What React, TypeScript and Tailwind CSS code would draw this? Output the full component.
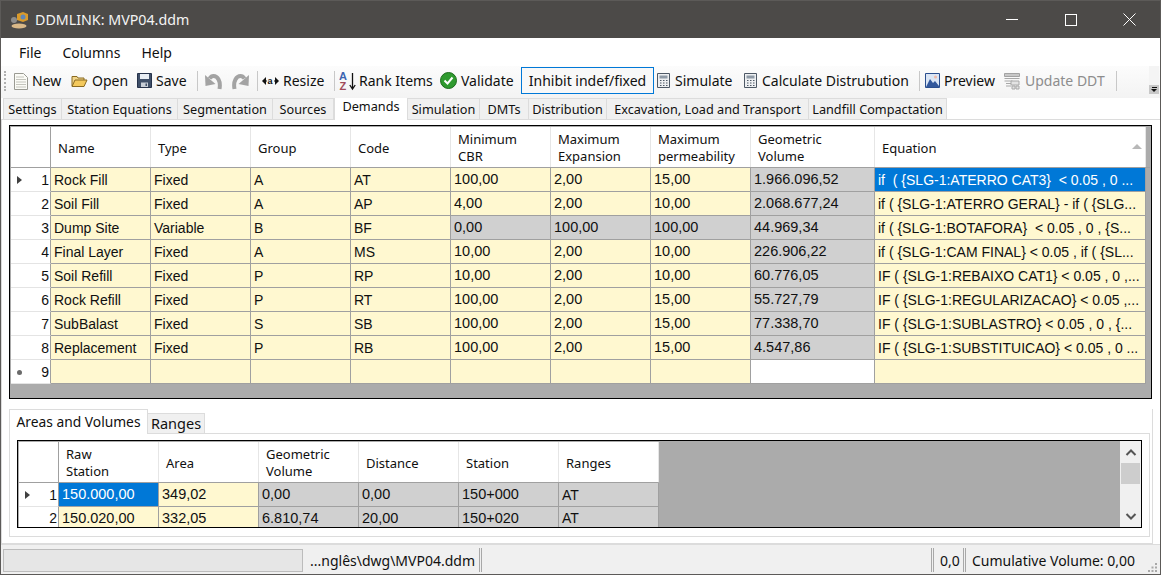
import type { ReactNode } from "react"

const ui = "font-['Noto_Sans',sans-serif]"
const cellFont = "font-['Liberation_Sans',sans-serif]"

const mainCols = "grid-cols-[40px_100px_100px_100px_100px_100px_100px_100px_124px_271px]"
const subCols = "grid-cols-[40px_100px_100px_100px_100px_100px_100px]"

const mainHeaders = ["Name", "Type", "Group", "Code", "Minimum\nCBR", "Maximum\nExpansion", "Maximum\npermeability", "Geometric\nVolume", "Equation"]

const rows = [
  ["Rock Fill", "Fixed", "A", "AT", "100,00", "2,00", "15,00", "1.966.096,52", "if  ( {SLG-1:ATERRO CAT3}  < 0.05 , 0 ..."],
  ["Soil Fill", "Fixed", "A", "AP", "4,00", "2,00", "10,00", "2.068.677,24", "if ( {SLG-1:ATERRO GERAL} - if ( {SLG..."],
  ["Dump Site", "Variable", "B", "BF", "0,00", "100,00", "100,00", "44.969,34", "if ( {SLG-1:BOTAFORA}  < 0.05 , 0 , {S..."],
  ["Final Layer", "Fixed", "A", "MS", "10,00", "2,00", "10,00", "226.906,22", "if ( {SLG-1:CAM FINAL} < 0.05 , if ( {SL..."],
  ["Soil Refill", "Fixed", "P", "RP", "10,00", "2,00", "10,00", "60.776,05", "IF ( {SLG-1:REBAIXO CAT1} < 0.05 , 0 ,..."],
  ["Rock Refill", "Fixed", "P", "RT", "100,00", "2,00", "15,00", "55.727,79", "IF ( {SLG-1:REGULARIZACAO} < 0.05 ,..."],
  ["SubBalast", "Fixed", "S", "SB", "100,00", "2,00", "15,00", "77.338,70", "IF ( {SLG-1:SUBLASTRO} < 0.05 , 0 , {..."],
  ["Replacement", "Fixed", "P", "RB", "100,00", "2,00", "15,00", "4.547,86", "IF ( {SLG-1:SUBSTITUICAO} < 0.05 , 0 ..."],
  ["", "", "", "", "", "", "", "", ""],
]

const subHeaders = ["Raw\nStation", "Area", "Geometric\nVolume", "Distance", "Station", "Ranges"]
const subRows = [
  ["150.000,00", "349,02", "0,00", "0,00", "150+000", "AT"],
  ["150.020,00", "332,05", "6.810,74", "20,00", "150+020", "AT"],
]

const tabs = [
  ["Settings", "w-[59px]"],
  ["Station Equations", "w-[116px]"],
  ["Segmentation", "w-[95px]"],
  ["Sources", "w-[61px]"],
  ["Demands", "w-[74px]"],
  ["Simulation", "w-[72px]"],
  ["DMTs", "w-[49px]"],
  ["Distribution", "w-[78px]"],
  ["Excavation, Load and Transport", "w-[202px]"],
  ["Landfill Compactation", "w-[138px]"],
]

function NewIcon() {
  return (
    <svg width="14" height="18" viewBox="0 0 14 18">
      <path d="M.5 1.500h9l4 4v12H.5z" fill="#fbfbf6" stroke="#9a9a92" />
      <path d="M2 5h8M2 7.500h10M2 10h10M2 12.500h10M2 15h10" stroke="#c4c4bc" />
    </svg>
  )
}

function OpenIcon() {
  return (
    <svg width="17" height="14" viewBox="0 0 17 14">
      <path d="M1 12V2.500h5l1 1.500h6v2" fill="#f1d58a" stroke="#8a6a20" />
      <path d="M1 12.500 4 6h12l-3 6.500z" fill="#f4c95c" stroke="#8a6a20" />
    </svg>
  )
}

function SaveIcon() {
  return (
    <svg width="15" height="15" viewBox="0 0 15 15">
      <path d="M.5.5h14v14H.5z" fill="#3f4f68" stroke="#26324a" />
      <path d="M3 1h9v5H3z" fill="#e8edf3" />
      <path d="M4 9.500h7V14H4z" fill="#c8ced6" />
      <path d="M8.500 10.500h1.500V13H8.500z" fill="#3f4f68" />
    </svg>
  )
}

function UndoIcon({ flip }: { flip?: boolean }) {
  return (
    <svg width="17" height="18" viewBox="0 0 17 18" className={flip ? "-scale-x-100" : ""}>
      <path d="M14.500 17C16 9 12.500 4 8.500 4 6.500 4 5.500 5 4.500 6.500" fill="none" stroke="#a3a3a3" strokeWidth="4" />
      <path d="M0 3 .5 14l10-2z" fill="#a3a3a3" />
    </svg>
  )
}

function ResizeIcon() {
  return (
    <svg width="17" height="10" viewBox="0 0 17 10">
      <path d="M0 5l4-4v8zM17 5l-4-4v8z" fill="#111" />
      <path d="M4 5h1M12 5h1" stroke="#111" />
      <text x="5.500" y="8" fontSize="9" fontWeight="700" fontFamily="Liberation Sans" fill="#111">a</text>
    </svg>
  )
}

function RankIcon() {
  return (
    <svg width="18" height="20" viewBox="0 0 18 20">
      <text x="0" y="9" fontSize="11" fontWeight="700" fontFamily="Liberation Sans" fill="#3b64b0">A</text>
      <text x="0.500" y="19" fontSize="11" fontWeight="700" fontFamily="Liberation Sans" fill="#a04a5a">Z</text>
      <path d="M13.500 2v16M10.800 14l2.700 4 2.700-4" fill="none" stroke="#111" strokeWidth="1.300" />
    </svg>
  )
}

function ValidateIcon() {
  return (
    <svg width="17" height="17" viewBox="0 0 17 17">
      <circle cx="8.500" cy="8.500" r="8" fill="#2f9a2f" stroke="#1d6b1d" />
      <path d="M4.500 8.500l3 3 5-6" fill="none" stroke="#fff" strokeWidth="2" />
    </svg>
  )
}

function CalcIcon() {
  return (
    <svg width="13" height="15" viewBox="0 0 13 15">
      <path d="M.5.5h12v14H.5z" fill="#eef0f2" stroke="#4e5966" />
      <path d="M2.500 2.500h8v3h-8z" fill="#8f9aa6" />
      <path d="M3 7.500h1.500M6 7.500h1.500M9 7.500h1.500M3 10h1.500M6 10h1.500M9 10h1.500M3 12.500h1.500M6 12.500h1.500M9 12.500h1.500" stroke="#4e5966" />
    </svg>
  )
}

function PreviewIcon() {
  return (
    <svg width="15" height="15" viewBox="0 0 15 15">
      <path d="M.5.5h14v14H.5z" fill="#dbe6f5" stroke="#2b4f8f" />
      <path d="M1 14 5 6l3 4 2-2 4 5v1z" fill="#33589c" />
      <circle cx="10.500" cy="4" r="1.500" fill="#f0b9a8" />
    </svg>
  )
}

function UpdateIcon() {
  return (
    <svg width="17" height="18" viewBox="0 0 17 18">
      <path d="M.5 1.500h15v3H.5z" fill="#c8c8c8" stroke="#a3a3a3" />
      <path d="M.5 6.500h15M.5 9h8M2 11.500h6M2 14h5" stroke="#a8a8a8" />
      <path d="M7 9h8v4H7zM8 14h3v3H8zM12 14h3v3h-3z" fill="#e3e3e3" stroke="#a8a8a8" />
    </svg>
  )
}

function ToolItem({ icon, label, width, gap = "gap-[4px]", disabled }: { icon: ReactNode; label: string; width: string; gap?: string; disabled?: boolean }) {
  return (
    <div className={`flex items-center shrink-0 ${width} ${gap} ${disabled ? "text-[#8d8d8d]" : "text-[#101010]"}`}>
      {icon}
      <span className="whitespace-nowrap">{label}</span>
    </div>
  )
}

function Sep({ margin }: { margin: string }) {
  return <div className={`w-px h-[20px] bg-[#c8c8c8] shrink-0 ${margin}`} />
}

function HeaderCell({ text, sort }: { text: string; sort?: boolean }) {
  return (
    <div className="relative flex items-center pl-[7px] pt-[2px] bg-white border-r border-[#e6e6e6] whitespace-pre-line leading-[17px] text-[13px] text-[#101010]">
      {text}
      {sort && <div className="absolute right-[3px] top-[17px] w-0 h-0 border-x-[5px] border-b-[5px] border-x-transparent border-b-[#b8b8b8]" />}
    </div>
  )
}

function RowHead({ n, mark }: { n: number; mark?: "arrow" | "star" }) {
  return (
    <div className="relative flex items-center justify-end pr-[1px] pt-[1px] bg-white border-r border-b border-[#a0a0a0] border-b-[#e4e4e4] text-[14px] text-[#101010]">
      {mark === "arrow" && <div className="absolute left-[6px] top-[8px] w-0 h-0 border-y-[4.500px] border-l-[5px] border-y-transparent border-l-[#404040]" />}
      {mark === "star" && <div className="absolute left-[6px] top-[10px] w-[5px] h-[5px] rounded-full bg-[#6a6a6a]" />}
      {n}
    </div>
  )
}

function Cell({ text, kind }: { text: string; kind: "edit" | "calc" | "blank" | "selected" }) {
  const tone = {
    edit: "bg-[#fff8d0] text-[#101010]",
    calc: "bg-[#d0d0d0] text-[#101010]",
    blank: "bg-white text-[#101010]",
    selected: "bg-[#0078d7] text-white",
  }[kind]
  const size = /^\d/.test(text) ? "text-[14.500px]" : "text-[14px]"
  return <div className={`flex items-center pl-[3px] pt-[1px] overflow-hidden whitespace-pre border-r border-b border-[#a0a0a0] ${size} ${tone}`}>{text}</div>
}

function mainKind(r: number, c: number) {
  if (r === 0 && c === 8) return "selected" as const
  if (c === 7) return r === 8 ? ("blank" as const) : ("calc" as const)
  if (r === 2 && c >= 4 && c <= 6) return "calc" as const
  return "edit" as const
}

function subKind(r: number, c: number) {
  if (r === 0 && c === 0) return "selected" as const
  return c < 2 ? ("edit" as const) : ("calc" as const)
}

export default function App() {
  return (
    <div className={`w-[1161px] h-[575px] flex flex-col overflow-hidden bg-white border border-[#5c5a58] border-t-0 ${ui}`}>
      {/* title bar */}
      <div className="h-[38px] shrink-0 flex items-center bg-[#4c4a48] text-white border-t border-[#5c5a58]">
        <svg width="22" height="20" viewBox="0 0 22 20" className="ml-[8px]">
          <ellipse cx="10" cy="16" rx="7.500" ry="2.500" fill="#d9b888" />
          <path d="M8 4l6-2 5 2v6l-5 2-6-2z" fill="#d99a2b" />
          <circle cx="14" cy="7" r="2.500" fill="#5f87b8" />
          <circle cx="5" cy="10" r="3" fill="#8d8d8d" />
        </svg>
        <span className="ml-[4px] text-[14.250px] text-[#f4f4f4]">DDMLINK: MVP04.ddm</span>
        <div className="ml-auto flex items-center mr-[1px]">
          <div className="w-[59px] h-[38px] flex items-center justify-center"><div className="w-[12px] h-px bg-white" /></div>
          <div className="w-[59px] h-[38px] flex items-center justify-center"><div className="w-[12px] h-[12px] border border-white" /></div>
          <div className="w-[59px] h-[38px] flex items-center justify-center">
            <svg width="13" height="13" viewBox="0 0 13 13"><path d="M.5.5l12 12M12.500.5l-12 12" stroke="#fff" /></svg>
          </div>
        </div>
      </div>

      {/* menu */}
      <div className="h-[28px] shrink-0 flex items-center pl-[18px] gap-[21px] bg-white text-[14px] text-[#101010]">
        <span>File</span>
        <span>Columns</span>
        <span>Help</span>
      </div>

      {/* toolbar */}
      <div className="h-[32px] shrink-0 flex items-center pb-[3px] bg-gradient-to-b from-[#fcfcfc] to-[#f3f3f3] text-[14px] relative">
        <div className="w-[2px] h-[20px] ml-[3px] mr-[8px] border-l-2 border-dotted border-[#b0b0b0] shrink-0" />
        <ToolItem icon={<NewIcon />} label="New" width="w-[57px]" />
        <ToolItem icon={<OpenIcon />} label="Open" width="w-[66px]" />
        <ToolItem icon={<SaveIcon />} label="Save" width="w-[60px]" />
        <Sep margin="mr-[7px]" />
        <div className="flex gap-[10px] w-[52px] shrink-0"><UndoIcon /><UndoIcon flip /></div>
        <Sep margin="mr-[4px]" />
        <ToolItem icon={<ResizeIcon />} label="Resize" width="w-[72px]" />
        <Sep margin="mr-[4px]" />
        <ToolItem icon={<RankIcon />} label="Rank Items" width="w-[101px]" gap="gap-[2px]" />
        <ToolItem icon={<ValidateIcon />} label="Validate" width="w-[81px]" />
        <div className="h-[27px] w-[133px] shrink-0 p-px bg-[#0078d7] mr-[3px]">
          <div className="h-full flex items-center justify-center bg-[#f8f8f8] text-[#101010] whitespace-nowrap">Inhibit indef/fixed</div>
        </div>
        <ToolItem icon={<CalcIcon />} label="Simulate" width="w-[87px]" gap="gap-[5px]" />
        <ToolItem icon={<CalcIcon />} label="Calculate Distrubution" width="w-[175px]" gap="gap-[5px]" />
        <Sep margin="mr-[5px]" />
        <ToolItem icon={<PreviewIcon />} label="Preview" width="w-[79px]" />
        <ToolItem icon={<UpdateIcon />} label="Update DDT" width="w-[112px]" disabled />
        <Sep margin="" />
        <div className="absolute right-[1px] top-0 w-[10px] h-[28px] bg-[#f4f4f4] flex flex-col justify-end">
          <div className="h-[9px] bg-[#c8c8c8] flex flex-col items-center justify-center gap-[1px]">
            <div className="w-[5px] h-px bg-[#111]" />
            <div className="w-0 h-0 border-x-[3px] border-t-[3px] border-x-transparent border-t-[#111]" />
          </div>
        </div>
      </div>

      {/* main tabs */}
      <div className="h-[22px] shrink-0 flex items-end pl-[2px] bg-white border-b border-[#dcdcdc] text-[12.700px] text-[#101010]">
        {tabs.map(([name, w]) =>
          name === "Demands" ? (
            <div key={name} className={`${w} h-[25px] -mb-px pb-[2px] flex items-center justify-center bg-white border border-b-0 border-[#dcdcdc]`}>{name}</div>
          ) : (
            <div key={name} className={`${w} h-[21px] pt-[1px] flex items-center justify-center bg-[#f0f0f0] border border-l-0 border-b-0 first:border-l border-[#dcdcdc] whitespace-nowrap`}>{name}</div>
          ),
        )}
      </div>

      {/* demands page */}
      <div className="flex-1 min-h-0 flex flex-col bg-white border-l border-[#dcdcdc]">
        <div className="ml-[7px] w-[1143px] mt-[5px] h-[274px] shrink-0 flex flex-col border border-black bg-[#ababab] p-px">
          <div className={`grid ${mainCols} h-[41px] shrink-0 border-b border-[#a0a0a0]`}>
            <div className="bg-white border-r border-[#a0a0a0]" />
            {mainHeaders.map((h) => (
              <HeaderCell key={h} text={h} sort={h === "Equation"} />
            ))}
          </div>
          {rows.map((row, r) => (
            <div key={r} className={`grid ${mainCols} h-[24px] shrink-0 ${cellFont}`}>
              <RowHead n={r + 1} mark={r === 0 ? "arrow" : r === 8 ? "star" : undefined} />
              {row.map((v, c) => (
                <Cell key={c} text={v} kind={mainKind(r, c)} />
              ))}
            </div>
          ))}
        </div>

        {/* lower panel */}
        <div className="w-[1151px] flex-1 min-h-0 mt-[10px] pl-[7px] pr-[2px] border-r border-b border-[#dcdcdc]">
          <div className="h-[25px] flex items-end text-[#101010]">
            <div className="w-[139px] h-[25px] flex items-center justify-center bg-white border border-b-0 border-[#dcdcdc] text-[13.800px]">Areas and Volumes</div>
            <div className="w-[57px] h-[21px] pt-[1px] flex items-center justify-center bg-[#f0f0f0] border border-l-0 border-[#dcdcdc] text-[14.500px]">Ranges</div>
            <div className="flex-1 h-px bg-[#dcdcdc]" />
          </div>
          <div className="h-[103px] border border-t-0 border-[#dcdcdc] px-[7px] pt-[6px]">
            <div className="h-[88px] flex border border-black bg-[#ababab] overflow-hidden">
              <div className="w-[640px] shrink-0 pl-[1px] pt-[1px]">
                <div className={`grid ${subCols} h-[41px] border-b border-[#a0a0a0]`}>
                  <div className="bg-white border-r border-[#a0a0a0]" />
                  {subHeaders.map((h) => (
                    <HeaderCell key={h} text={h} />
                  ))}
                </div>
                {subRows.map((row, r) => (
                  <div key={r} className={`grid ${subCols} ${r === 0 ? "h-[24px]" : "h-[22px]"} ${cellFont}`}>
                    <RowHead n={r + 1} mark={r === 0 ? "arrow" : undefined} />
                    {row.map((v, c) => (
                      <Cell key={c} text={v} kind={subKind(r, c)} />
                    ))}
                  </div>
                ))}
              </div>
              <div className="flex-1" />
              <div className="w-[21px] shrink-0 bg-[#f0f0f0] flex flex-col items-center">
                <svg width="12" height="20" viewBox="0 0 12 20" className="mt-[1px]"><path d="M1.500 13 6 8.500l4.500 4.500" fill="none" stroke="#555" strokeWidth="2" /></svg>
                <div className="w-[19px] h-[21px] bg-[#cdcdcd] mt-[1px]" />
                <svg width="12" height="20" viewBox="0 0 12 20" className="mt-auto mb-[1px]"><path d="M1.500 8 6 12.500l4.500-4.500" fill="none" stroke="#555" strokeWidth="2" /></svg>
              </div>
            </div>
          </div>
        </div>
      </div>

      {/* status bar */}
      <div className="h-[30px] shrink-0 relative flex items-center pt-[1px] bg-[#f0f0f0] border-t border-[#dcdcdc] text-[14px] text-[#101010]">
        <div className="w-[300px] h-[23px] ml-[2px] bg-[#e6e6e6] border border-[#bcbcbc] shrink-0" />
        <span className="ml-[7px] w-[169px] whitespace-nowrap shrink-0">...nglês\dwg\MVP04.ddm</span>
        <div className="h-[24px] w-[3px] border-x border-[#a8a8a8] shrink-0" />
        <div className="w-[449px] shrink-0" />
        <div className="h-[24px] w-[3px] border-x border-[#a8a8a8] shrink-0" />
        <span className="ml-[6px] w-[23px] shrink-0">0,0</span>
        <div className="h-[24px] w-[3px] border-x border-[#a8a8a8] shrink-0" />
        <span className="ml-[6px] whitespace-nowrap">Cumulative Volume: 0,00</span>
        <svg width="11" height="11" viewBox="0 0 11 11" className="absolute right-[2px] bottom-[1px]">
          <path d="M8 1h2v2H8zM4.500 4.500h2v2h-2zM8 4.500h2v2H8zM1 8h2v2H1zM4.500 8h2v2h-2zM8 8h2v2H8z" fill="#a8a8a8" />
        </svg>
      </div>
    </div>
  )
}
